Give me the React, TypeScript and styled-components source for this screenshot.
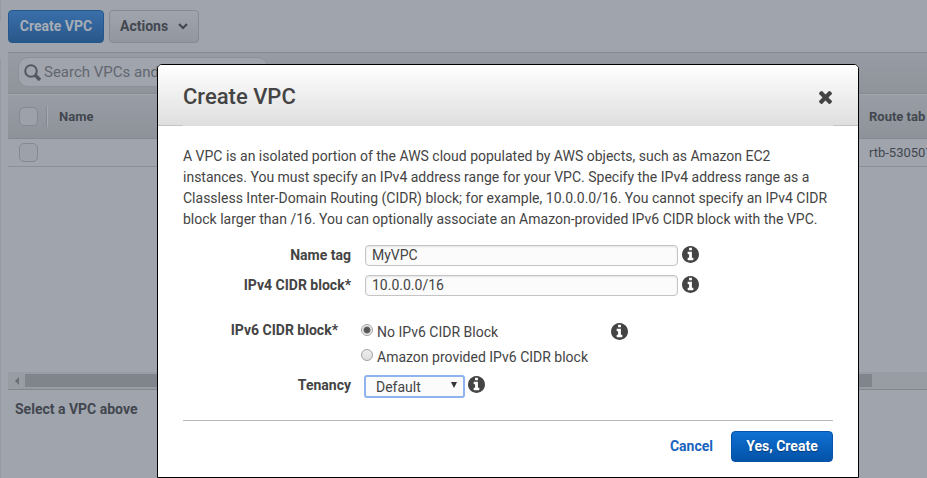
import React, { useState } from "react";
import styled, { createGlobalStyle } from "styled-components";

const Global = createGlobalStyle`
  * { box-sizing: border-box; }
  body { margin: 0; background: #a0a4ac; font: 14px/21px Roboto, "Liberation Sans", sans-serif; color: #444; overflow: hidden; }
  button, input, select { font: inherit; color: inherit; margin: 0; }
`;

const Page = styled.div`
  display: flex;
  gap: 7px;
  min-height: 100vh;
`;

const Rail = styled.aside`
  display: flex;
  flex-direction: column;
  gap: 38px;
  width: 1px;
  flex-shrink: 0;
`;

const RailPart = styled.div<{ $grow?: boolean }>`
  background: #969aa2;
  height: 21px;
  ${(p) => p.$grow && "flex: 1;"}
`;

const Main = styled.main`
  flex: 1;
  min-width: 0;
  display: flex;
  flex-direction: column;
`;

const Actions = styled.div`
  display: flex;
  gap: 5px;
  padding: 10px 0 9px;
`;

const ToolButton = styled.button<{ $primary?: boolean }>`
  display: flex;
  align-items: center;
  justify-content: center;
  gap: 10px;
  height: 33px;
  min-width: ${(p) => (p.$primary ? 96 : 90)}px;
  padding: 0 10px;
  border-radius: 4px;
  font-weight: 700;
  border: 1px solid ${(p) => (p.$primary ? "#23588f" : "#858a92")};
  background: ${(p) => (p.$primary ? "linear-gradient(#3a6faa, #29578a)" : "linear-gradient(#a0a5ad, #92979f)")};
  color: ${(p) => (p.$primary ? "#a8adb5" : "#42474f")};
`;

const SearchBar = styled.div`
  height: 42px;
  padding: 4px 10px;
  border-top: 1px solid #858a92;
  border-bottom: 1px solid #858a92;
  background: linear-gradient(#979ca4, #8f949b);
`;

const SearchBox = styled.label`
  display: flex;
  align-items: center;
  gap: 3px;
  width: 250px;
  height: 30px;
  padding-left: 5px;
  border: 1px solid #8c9199;
  border-radius: 10px;
  background: #a0a4ac;
  color: #535860;
`;

const SearchInput = styled.input`
  flex: 1;
  min-width: 0;
  border: 0;
  padding: 0;
  background: none;
  outline: none;
  font-size: 15px;
  &::placeholder { color: #62676f; opacity: 1; }
`;

const TableArea = styled.div`
  height: 278px;
  overflow: hidden;
`;

const Table = styled.table`
  width: 100%;
  border-collapse: separate;
  border-spacing: 0;
  table-layout: fixed;
  font-size: 13px;
  line-height: 18px;
`;

const Head = styled.th<{ $width?: number }>`
  width: ${(p) => (p.$width ? p.$width + "px" : "auto")};
  height: 45px;
  padding: 0 0 0 10px;
  text-align: left;
  white-space: nowrap;
  font-weight: 700;
  color: #42474f;
  border-top: 1px solid #a2a7af;
  border-bottom: 1px solid #858a92;
  background: linear-gradient(#989da5, #8e939a);
`;

const Cell = styled.td`
  height: 28px;
  padding: 0 0 0 10px;
  white-space: nowrap;
  border-bottom: 1px solid #8c9199;
  color: #42474f;
`;

const CheckCell = styled.div<{ $divided?: boolean }>`
  display: flex;
  align-items: center;
  height: 21px;
  width: 30px;
  padding-left: 1px;
  ${(p) => p.$divided && "border-right: 1px solid #a6abb3; box-shadow: inset -1px 0 #858a92;"}
`;

const Check = styled.input`
  appearance: none;
  width: 19px;
  height: 19px;
  border: 1px solid #858a92;
  border-radius: 5px;
  background: #9da2aa;
`;

const Scrollbar = styled.div`
  display: flex;
  align-items: center;
  gap: 4px;
  height: 18px;
  padding-left: 6px;
  background: #989ca3;
  border-bottom: 1px solid #82868e;
`;

const ScrollThumb = styled.div`
  width: calc(100% - 66px);
  height: 13px;
  background: #80848b;
`;

const Summary = styled.p`
  margin: 0;
  padding: 9px 7px;
  font-weight: 700;
  color: #42474f;
`;

const Overlay = styled.div`
  position: fixed;
  inset: 0;
  display: flex;
  align-items: flex-start;
  padding: 64px 68px 0 157px;
`;

const Dialog = styled.section`
  flex: 1;
  border: 1px solid #000;
  border-radius: 5px 5px 0 0;
  background: #fff;
  overflow: hidden;
`;

const DialogHeader = styled.header`
  display: flex;
  align-items: center;
  justify-content: space-between;
  height: 61px;
  padding: 3px 26px 0 25px;
  background:
    linear-gradient(#c4c4c4, #c4c4c4) left bottom / 25px 1px no-repeat,
    linear-gradient(#c4c4c4, #c4c4c4) right bottom / 25px 1px no-repeat,
    linear-gradient(#fff, #dedede);
`;

const Title = styled.h1`
  margin: 0;
  font-size: 22px;
  line-height: 28px;
  font-weight: 500;
`;

const IconButton = styled.button`
  display: flex;
  border: 0;
  padding: 0;
  background: none;
  color: #444;
`;

const Content = styled.form`
  padding: 20px 25px 15px;
`;

const Intro = styled.p`
  margin: 0 0 15px;
`;

const Fields = styled.div`
  display: flex;
  flex-direction: column;
  gap: 9px;
`;

const Row = styled.div`
  display: flex;
  align-items: flex-start;
`;

const FieldLabel = styled.label`
  width: 168px;
  margin-right: 14px;
  text-align: right;
  font-weight: 700;
`;

const TextInput = styled.input`
  flex: 0 1 313px;
  min-width: 0;
  height: 21px;
  padding: 0 6px;
  border: 1px solid #c4c4c4;
  border-radius: 4px;
  background: #fbfbfb;
  box-shadow: inset 0 1px 2px #e4e4e4;
  outline: none;
`;

const Group = styled.fieldset`
  display: flex;
  align-items: flex-start;
  border: 0;
  margin: 15px 0 0;
  padding: 0;
  min-width: 0;
`;

const GroupLabel = styled.span`
  width: 155px;
  margin-right: 23px;
  text-align: right;
  font-weight: 700;
`;

const Options = styled.div`
  display: flex;
  flex-direction: column;
  gap: 4px;
  width: 246px;
  padding-top: 2px;
`;

const Option = styled.label`
  display: flex;
  gap: 4px;
  white-space: nowrap;
`;

const Radio = styled.input`
  appearance: none;
  width: 12px;
  height: 12px;
  margin-top: 2px;
  border: 1px solid #a2a2a2;
  border-radius: 50%;
  background: linear-gradient(#eee, #ddd);
  &:checked { background: radial-gradient(circle, #555 0 2px, #666 3px, #eee 4px); }
`;

const TenancyRow = styled(Row)`
  margin-top: -2px;
`;

const SelectWrap = styled.span`
  display: grid;
  align-items: center;
  width: 101px;
  margin-left: -1px;
  & > * { grid-area: 1 / 1; }
`;

const Select = styled.select`
  appearance: none;
  width: 100%;
  height: 23px;
  padding: 0 10px;
  border: 2px solid #8fb3ee;
  border-radius: 3px;
  background: #fbfbfb;
  outline: none;
`;

const Arrow = styled.svg`
  justify-self: end;
  margin: 0 7px 3px 0;
  pointer-events: none;
`;

const InfoButton = styled(IconButton)<{ $gap: number; $drop: number }>`
  margin: ${(p) => p.$drop}px 0 0 ${(p) => p.$gap}px;
`;

const Footer = styled.footer`
  display: flex;
  align-items: center;
  justify-content: flex-end;
  gap: 18px;
  margin-top: 22px;
  padding-top: 10px;
  border-top: 1px solid #b8b8b8;
`;

const Cancel = styled.a`
  color: #1a63bd;
  font-weight: 700;
  text-decoration: none;
`;

const Submit = styled.button`
  height: 31px;
  min-width: 102px;
  padding: 0 14px;
  border: 1px solid #0653a8;
  border-radius: 4px;
  background: linear-gradient(#1070d2, #0353a8);
  color: #fff;
  font-weight: 700;
  text-shadow: 0 1px 1px #033a78;
`;

function Info({ about, gap = 4, drop = 1 }: { about: string; gap?: number; drop?: number }) {
  return (
    <InfoButton type="button" $gap={gap} $drop={drop} aria-label={"About " + about}>
      <svg width="17" height="17" viewBox="0 128 1536 1536" fill="currentColor" aria-hidden="true">
        <path d="M1024 1376v-160q0-14-9-23t-23-9h-96v-512q0-14-9-23t-23-9h-320q-14 0-23 9t-9 23v160q0 14 9 23t23 9h96v320h-96q-14 0-23 9t-9 23v160q0 14 9 23t23 9h448q14 0 23-9t9-23zm-128-896v-160q0-14-9-23t-23-9h-192q-14 0-23 9t-9 23v160q0 14 9 23t23 9h192q14 0 23-9t9-23zm640 416q0 209-103 385.5t-279.5 279.5-385.5 103-385.5-103-279.5-279.5-103-385.5 103-385.5 279.5-279.5 385.5-103 385.5 103 279.5 279.5 103 385.5z" />
      </svg>
    </InfoButton>
  );
}

export default function App() {
  const [ipv6, setIpv6] = useState("none");
  return (
    <>
      <Global />
      <Page>
        <Rail><RailPart /><RailPart $grow /></Rail>
        <Main>
          <Actions>
            <ToolButton $primary>Create VPC</ToolButton>
            <ToolButton>
              Actions
              <svg width="10" height="7" viewBox="0 0 10 7" fill="none" stroke="currentColor" strokeWidth="2" aria-hidden="true">
                <path d="M1 1l4 4 4-4" />
              </svg>
            </ToolButton>
          </Actions>
          <SearchBar>
            <SearchBox>
              <svg width="17" height="17" viewBox="0 0 17 17" fill="none" stroke="currentColor" aria-hidden="true">
                <circle cx="7" cy="7" r="5.8" strokeWidth="2" />
                <path d="M11 11l5 5" strokeWidth="3.4" />
              </svg>
              <SearchInput type="search" aria-label="Search VPCs" placeholder="Search VPCs and" />
            </SearchBox>
          </SearchBar>
          <TableArea>
            <Table>
              <thead>
                <tr>
                  <Head $width={41}><CheckCell $divided><Check type="checkbox" aria-label="Select all" /></CheckCell></Head>
                  <Head>Name</Head>
                  <Head $width={68}>Route tab</Head>
                </tr>
              </thead>
              <tbody>
                <tr>
                  <Cell><CheckCell><Check type="checkbox" aria-label="Select VPC" /></CheckCell></Cell>
                  <Cell />
                  <Cell>rtb-530507</Cell>
                </tr>
              </tbody>
            </Table>
          </TableArea>
          <Scrollbar>
            <svg width="7" height="8" viewBox="0 0 7 8" fill="#6b7077" aria-hidden="true"><path d="M5 0v8L1 4z" /></svg>
            <ScrollThumb />
          </Scrollbar>
          <Summary>Select a VPC above</Summary>
        </Main>
      </Page>
      <Overlay>
        <Dialog role="dialog" aria-modal="true" aria-labelledby="dialog-title">
          <DialogHeader>
            <Title id="dialog-title">Create VPC</Title>
            <IconButton type="button" aria-label="Close">
              <svg width="13" height="13" viewBox="110 366 1188 1188" fill="currentColor" aria-hidden="true">
                <path d="M1298 1322q0 40-28 68l-136 136q-28 28-68 28t-68-28l-294-294-294 294q-28 28-68 28t-68-28l-136-136q-28-28-28-68t28-68l294-294-294-294q-28-28-28-68t28-68l136-136q28-28 68-28t68 28l294 294 294-294q28-28 68-28t68 28l136 136q28 28 28 68t-28 68l-294 294 294 294q28 28 28 68z" />
              </svg>
            </IconButton>
          </DialogHeader>
          <Content onSubmit={(e) => e.preventDefault()}>
            <Intro>
              A VPC is an isolated portion of the AWS cloud populated by AWS objects, such as Amazon EC2
              instances. You must specify an IPv4 address range for your VPC. Specify the IPv4 address range as a
              Classless Inter-Domain Routing (CIDR) block; for example, 10.0.0.0/16. You cannot specify an IPv4 CIDR
              block larger than /16. You can optionally associate an Amazon-provided IPv6 CIDR block with the VPC.
            </Intro>
            <Fields>
              <Row>
                <FieldLabel htmlFor="name">Name tag</FieldLabel>
                <TextInput id="name" defaultValue="MyVPC" />
                <Info about="name tag" />
              </Row>
              <Row>
                <FieldLabel htmlFor="ipv4">IPv4 CIDR block*</FieldLabel>
                <TextInput id="ipv4" defaultValue="10.0.0.0/16" />
                <Info about="IPv4 CIDR block" />
              </Row>
              <Group aria-labelledby="ipv6-label">
                <GroupLabel id="ipv6-label">IPv6 CIDR block*</GroupLabel>
                <Options>
                  <Option>
                    <Radio type="radio" name="ipv6" checked={ipv6 === "none"} onChange={() => setIpv6("none")} />
                    No IPv6 CIDR Block
                  </Option>
                  <Option>
                    <Radio type="radio" name="ipv6" checked={ipv6 === "amazon"} onChange={() => setIpv6("amazon")} />
                    Amazon provided IPv6 CIDR block
                  </Option>
                </Options>
                <Info drop={3} about="IPv6 CIDR block" />
              </Group>
              <TenancyRow>
                <FieldLabel htmlFor="tenancy">Tenancy</FieldLabel>
                <SelectWrap>
                  <Select id="tenancy" defaultValue="Default">
                    <option>Default</option>
                    <option>Dedicated</option>
                  </Select>
                  <Arrow width="8" height="6" viewBox="0 0 8 6" fill="#333" aria-hidden="true"><path d="M1 0h6L4 6z" /></Arrow>
                </SelectWrap>
                <Info gap={3} about="tenancy" />
              </TenancyRow>
            </Fields>
            <Footer>
              <Cancel href="#cancel">Cancel</Cancel>
              <Submit type="submit">Yes, Create</Submit>
            </Footer>
          </Content>
        </Dialog>
      </Overlay>
    </>
  );
}
